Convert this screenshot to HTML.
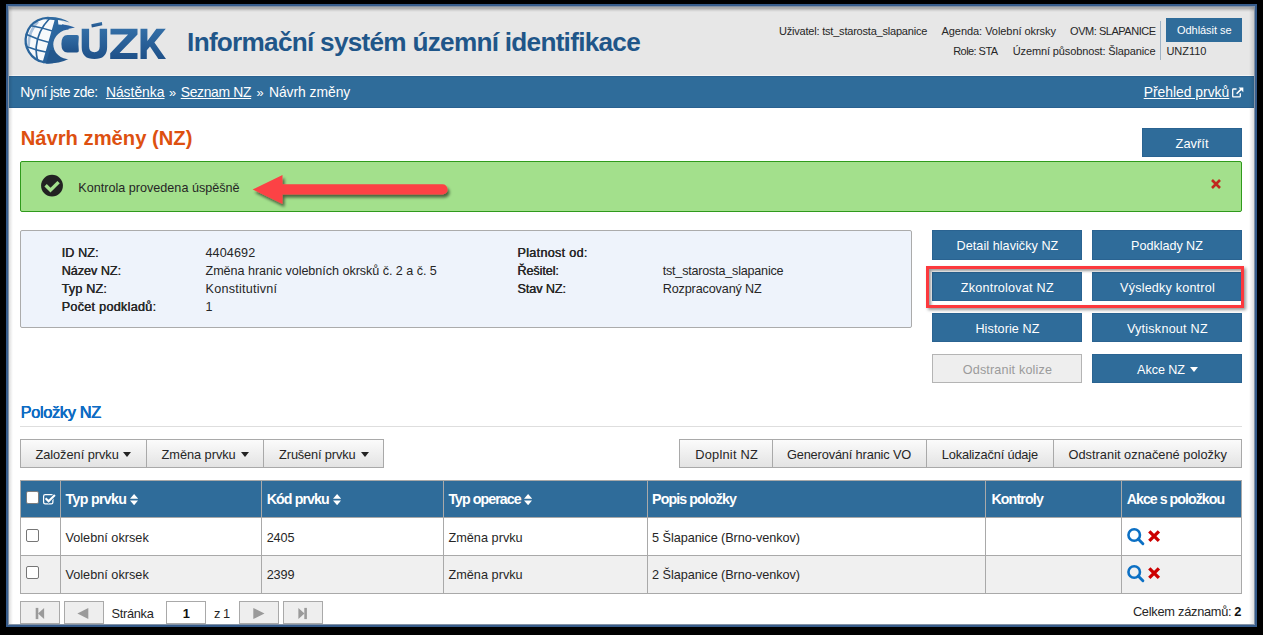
<!DOCTYPE html>
<html><head><meta charset="utf-8"><style>
html,body{margin:0;padding:0;}
body{width:1263px;height:635px;background:#000;position:relative;overflow:hidden;font-family:"Liberation Sans",sans-serif;}
.a{position:absolute;}
.t{position:absolute;white-space:pre;line-height:1;}
.caret{position:absolute;width:0;height:0;border-left:4px solid transparent;border-right:4px solid transparent;border-top:4px solid #222;}
</style></head><body>
<div class="a" style="left:6px;top:4px;width:1251px;height:623px;background:#375c8b;"></div>
<div class="a" style="left:8px;top:6px;width:1247px;height:619px;background:#8493a6;"></div>
<div class="a" style="left:9px;top:7px;width:1245px;height:617px;background:#fff;"></div>
<!-- header -->
<div class="a" style="left:9px;top:7px;width:1245px;height:68px;background:#e7e7e7;"></div>
<div class="a" style="left:9px;top:7px;width:1245px;height:5px;background:linear-gradient(#a8a8a8 0%,#b0b0b0 30%,#d2d2d2 65%,#e7e7e7 100%);"></div>
<div class="a" style="left:9px;top:75px;width:1245px;height:1px;background:#f4f4f4;"></div>
<div class="a" style="left:9px;top:76px;width:1245px;height:32px;background:#2f6c9a;box-shadow:inset 0 1px 0 #2a6190, inset 0 -1px 0 #2a6190;"></div>

<svg class="a" style="left:20px;top:12px" width="150" height="56" viewBox="20 12 150 56">
 <defs>
  <clipPath id="gc"><circle cx="48" cy="40.3" r="23.4"/></clipPath>
  <linearGradient id="lg" x1="0" y1="0" x2="0" y2="1"><stop offset="0" stop-color="#336ea6"/><stop offset="1" stop-color="#1f5189"/></linearGradient>
  <linearGradient id="gg" x1="0" y1="0" x2="1" y2="1"><stop offset="0" stop-color="#3473ac"/><stop offset="1" stop-color="#1d4f86"/></linearGradient>
 </defs>
 <circle cx="48" cy="40.3" r="23.4" fill="#f7f9fb"/>
 <g clip-path="url(#gc)">
  <g fill="none">
   <path d="M38 21.5 Q28.5 31 28.6 46" stroke="#a9c1dc" stroke-width="2.6"/>
   <path d="M49.5 18.5 Q37.5 31 36.2 47 Q35.8 56 38.6 63" stroke="#2b659c" stroke-width="1.7"/>
   <path d="M30 25.5 Q42 27.5 55 31.8" stroke="#2b659c" stroke-width="1.6"/>
   <path d="M25.5 34 Q38 40 52 43.2" stroke="#2b659c" stroke-width="1.6"/>
   <path d="M26.5 46.5 Q37 50.8 47 52.2" stroke="#2b659c" stroke-width="1.6"/>
  </g>
  <path d="M56.4 14 L41.5 66 L80 66 L80 28 Q68 24.6 58.4 24.4 Q57.6 20 58 14 Z" fill="url(#gg)"/>
 </g>
 <path d="M56 19.5 A22.3 22.3 0 1 0 44 62.24" fill="none" stroke="#2b659c" stroke-width="2.3"/>
 <path d="M46 63.6 Q60 63.5 68.5 59 L62 50 L50 50 Z" fill="#23578d"/>
 <path d="M62 24.2 Q69 25 75 27.6 Q69 28.8 63 30.5 Z" fill="#2a62a0"/>
 <path d="M46 16.95 Q62 16.3 69.7 22.6 Q62 19.6 56.5 20 L46 19.2 Z" fill="#2f6aa1"/>
 <ellipse cx="70" cy="44.5" rx="16.7" ry="15" fill="#e7e7e7"/>
 <path d="M67.5 35 H77 Q79 35 78.8 37 Q78 44 78.8 50.5 Q79 52.6 77 52.6 H67.5 Q61.4 52.6 61.4 44 Q61.4 35 67.5 35 Z" fill="url(#lg)"/>
 <g fill="url(#lg)">
  <path d="M81.7 28.8 h7.4 v17.8 q0 5.6 5.3 5.6 q5.3 0 5.3 -5.6 v-17.8 h7.4 v18.5 q0 11.8 -12.7 11.8 q-12.7 0 -12.7 -11.8 z"/>
  <path d="M91.3 24.2 L101.9 22 L102.3 25.2 L91.8 27.4 Z"/>
  <path d="M110.5 28.8 h27 v5.6 l-18 18.7 h18 v5.8 h-27.3 v-5.6 l17.9 -18.7 h-17.6 z"/>
  <path d="M140.5 28.8 h6.9 v12.3 l9 -12.3 h9.4 l-11.4 13.7 l11.6 16.4 h-7.6 l-8.4 -12.3 l-3.2 3.6 v8.7 h-6.3 z"/>
 </g>
</svg>
<!-- header right -->
<div class="a" style="left:1160px;top:21px;width:1px;height:39px;background:#9fb3c6;"></div>
<div class="a" style="left:1166px;top:18px;width:76px;height:24px;background:#2f6c9a;"></div>
<!-- zavrit -->
<div class="a" style="left:1142px;top:128px;width:100px;height:29px;box-sizing:border-box;background:#2f6c9a;border:1px solid #2a6391;"></div>
<!-- alert -->
<div class="a" style="left:20px;top:161px;width:1222px;height:51px;box-sizing:border-box;background:#a3e08c;border:1px solid #2f9a1c;border-radius:2px;"></div>
<svg class="a" style="left:40px;top:174px" width="24" height="24" viewBox="0 0 24 24">
 <circle cx="12" cy="11.65" r="10.9" fill="#222222"/>
 <path d="M5.6 11.3 L10.5 16.2 L18.6 8.1" stroke="#a3e08c" stroke-width="3.4" fill="none" stroke-linecap="butt"/>
</svg>
<svg class="a" style="left:1210px;top:178px" width="12" height="12" viewBox="0 0 12 12">
 <path d="M2 2 L10 10 M10 2 L2 10" stroke="#c0281e" stroke-width="2.6"/>
</svg>
<!-- arrow -->
<svg class="a" style="left:240px;top:165px" width="220" height="50" viewBox="240 165 220 50">
 <defs><filter id="sh" x="-20%" y="-50%" width="140%" height="200%"><feGaussianBlur in="SourceAlpha" stdDeviation="1.8"/><feOffset dx="1.5" dy="2.5"/><feComponentTransfer><feFuncA type="linear" slope="0.55"/></feComponentTransfer><feMerge><feMergeNode/><feMergeNode in="SourceGraphic"/></feMerge></filter></defs>
 <g filter="url(#sh)">
  <path d="M252.7 189.4 L282.5 174.9 L282.5 184.3 L442.5 184.3 A5.1 5.1 0 0 1 442.5 194.5 L282.5 194.5 L282.5 204 Z" fill="#fc4245"/>
 </g>
</svg>
<!-- info panel -->
<div class="a" style="left:20px;top:230px;width:892px;height:98px;box-sizing:border-box;background:#eef3fb;border:1px solid #ababab;border-radius:2px;"></div>
<div class="a" style="left:932px;top:230px;width:150px;height:30px;box-sizing:border-box;background:#2f6c9a;border:1px solid #2a6391;"></div><div class="a" style="left:1092px;top:230px;width:150px;height:30px;box-sizing:border-box;background:#2f6c9a;border:1px solid #2a6391;"></div><div class="a" style="left:932px;top:272px;width:150px;height:29px;box-sizing:border-box;background:#2f6c9a;border:1px solid #2a6391;"></div><div class="a" style="left:1092px;top:272px;width:150px;height:29px;box-sizing:border-box;background:#2f6c9a;border:1px solid #2a6391;"></div><div class="a" style="left:932px;top:313px;width:150px;height:29px;box-sizing:border-box;background:#2f6c9a;border:1px solid #2a6391;"></div><div class="a" style="left:1092px;top:313px;width:150px;height:29px;box-sizing:border-box;background:#2f6c9a;border:1px solid #2a6391;"></div><div class="a" style="left:932px;top:354px;width:150px;height:29px;box-sizing:border-box;background:#eeeeee;border:1px solid #b4b4b4;"></div><div class="a" style="left:1092px;top:354px;width:150px;height:29px;box-sizing:border-box;background:#2f6c9a;border:1px solid #2a6391;"></div>
<!-- red highlight -->
<div class="a" style="left:926px;top:266px;width:318px;height:42px;box-sizing:border-box;border:3px solid #fc393d;box-shadow:2px 2px 3px rgba(0,0,0,0.4), inset 2px 2px 3px rgba(0,0,0,0.4);"></div>
<div class="caret" style="left:1189.5px;top:367px;border-left-width:4.5px;border-right-width:4.5px;border-top:5px solid #fff;"></div>
<!-- polozky line -->
<div class="a" style="left:20px;top:426px;width:1222px;height:1px;background:#dedede;"></div>
<!-- toolbar left -->
<div class="a" style="left:20px;top:439px;width:364px;height:29px;box-sizing:border-box;border:1px solid #a9a9a9;background:linear-gradient(#fbfbfb,#e3e3e3);"></div>
<div class="a" style="left:146px;top:439px;width:1px;height:29px;background:#a9a9a9;"></div>
<div class="a" style="left:263px;top:439px;width:1px;height:29px;background:#a9a9a9;"></div>
<div class="caret" style="left:123px;top:452px;border-top-width:5px"></div>
<div class="caret" style="left:241px;top:452px;border-top-width:5px"></div>
<div class="caret" style="left:360.5px;top:452px;border-top-width:5px"></div>
<!-- toolbar right -->
<div class="a" style="left:679px;top:439px;width:563px;height:29px;box-sizing:border-box;border:1px solid #a9a9a9;background:linear-gradient(#fbfbfb,#e3e3e3);"></div>
<div class="a" style="left:772px;top:439px;width:1px;height:29px;background:#a9a9a9;"></div>
<div class="a" style="left:926px;top:439px;width:1px;height:29px;background:#a9a9a9;"></div>
<div class="a" style="left:1053px;top:439px;width:1px;height:29px;background:#a9a9a9;"></div>
<!-- table -->
<div class="a" style="left:20px;top:480px;width:1222px;height:114px;box-sizing:border-box;border:1px solid #a9a9a9;background:#fff;"></div>
<div class="a" style="left:21px;top:481px;width:1220px;height:36px;background:#2f6c9a;"></div>
<div class="a" style="left:21px;top:518px;width:1220px;height:37px;background:#fff;"></div>
<div class="a" style="left:21px;top:555px;width:1220px;height:1px;background:#a9a9a9;"></div>
<div class="a" style="left:21px;top:556px;width:1220px;height:37px;background:#f0f0f0;"></div>
<div class="a" style="left:21px;top:517px;width:1220px;height:1px;background:#a9a9a9;"></div>
<div class="a" style="left:60px;top:481px;width:1px;height:112px;background:#a9a9a9;"></div><div class="a" style="left:261px;top:481px;width:1px;height:112px;background:#a9a9a9;"></div><div class="a" style="left:443px;top:481px;width:1px;height:112px;background:#a9a9a9;"></div><div class="a" style="left:647px;top:481px;width:1px;height:112px;background:#a9a9a9;"></div><div class="a" style="left:985px;top:481px;width:1px;height:112px;background:#a9a9a9;"></div><div class="a" style="left:1121px;top:481px;width:1px;height:112px;background:#a9a9a9;"></div>
<!-- header checkbox icons -->
<div class="a" style="left:26px;top:491px;width:13px;height:13px;box-sizing:border-box;background:#fff;border:1px solid #7d7d7d;border-radius:2px;"></div>
<svg class="a" style="left:42px;top:492px" width="15" height="13" viewBox="0 0 15 13">
 <rect x="1.6" y="2.6" width="9.3" height="9.3" rx="1.6" stroke="#fff" stroke-width="1.25" fill="none"/>
 <path d="M3.6 6.2 L6.6 9.2 L12.9 2.9" stroke="#2f6c9a" stroke-width="3.6" fill="none"/>
 <path d="M3.6 6.2 L6.6 9.2 L12.9 2.9" stroke="#fff" stroke-width="2.1" fill="none"/>
</svg>
<!-- row checkboxes -->
<div class="a" style="left:26px;top:529px;width:13px;height:13px;box-sizing:border-box;border:1px solid #767676;border-radius:2px;background:#fff;"></div>
<div class="a" style="left:26px;top:566px;width:13px;height:13px;box-sizing:border-box;border:1px solid #767676;border-radius:2px;background:#fff;"></div>
<svg class="a" style="left:129.7px;top:493.9px" width="8.2" height="11.2" viewBox="0 0 8.2 11.2"><path d="M4.1 0 L8.2 4.8 H0 Z M4.1 11.2 L8.2 6.4 H0 Z" fill="#fff"/></svg><svg class="a" style="left:333.2px;top:493.9px" width="8.2" height="11.2" viewBox="0 0 8.2 11.2"><path d="M4.1 0 L8.2 4.8 H0 Z M4.1 11.2 L8.2 6.4 H0 Z" fill="#fff"/></svg><svg class="a" style="left:523.7px;top:493.9px" width="8.2" height="11.2" viewBox="0 0 8.2 11.2"><path d="M4.1 0 L8.2 4.8 H0 Z M4.1 11.2 L8.2 6.4 H0 Z" fill="#fff"/></svg>
<svg class="a" style="left:1126px;top:527px" width="19" height="19" viewBox="0 0 19 19"><circle cx="8.2" cy="8" r="5.75" stroke="#0c70c4" stroke-width="2.6" fill="none"/><path d="M12.2 12 L16.9 16.7" stroke="#0c70c4" stroke-width="2.9" stroke-linecap="round"/></svg><svg class="a" style="left:1147px;top:529px" width="14" height="14" viewBox="0 0 14 14"><path d="M2.3 2.3 L11.9 11.9 M11.9 2.3 L2.3 11.9" stroke="#cc0000" stroke-width="3.3" stroke-linecap="butt"/></svg><svg class="a" style="left:1126px;top:564px" width="19" height="19" viewBox="0 0 19 19"><circle cx="8.2" cy="8" r="5.75" stroke="#0c70c4" stroke-width="2.6" fill="none"/><path d="M12.2 12 L16.9 16.7" stroke="#0c70c4" stroke-width="2.9" stroke-linecap="round"/></svg><svg class="a" style="left:1147px;top:566px" width="14" height="14" viewBox="0 0 14 14"><path d="M2.3 2.3 L11.9 11.9 M11.9 2.3 L2.3 11.9" stroke="#cc0000" stroke-width="3.3" stroke-linecap="butt"/></svg>
<!-- pager -->
<div class="a" style="left:20px;top:601px;width:40px;height:23px;box-sizing:border-box;border:1px solid #a9a9a9;background:#eee;"></div>
<div class="a" style="left:64px;top:601px;width:40px;height:23px;box-sizing:border-box;border:1px solid #a9a9a9;background:#eee;"></div>
<div class="a" style="left:166px;top:601px;width:40px;height:23px;box-sizing:border-box;border:1px solid #a9a9a9;background:#fff;"></div>
<div class="a" style="left:239px;top:601px;width:40px;height:23px;box-sizing:border-box;border:1px solid #a9a9a9;background:#eee;"></div>
<div class="a" style="left:283px;top:601px;width:40px;height:23px;box-sizing:border-box;border:1px solid #a9a9a9;background:#eee;"></div>
<svg class="a" style="left:20px;top:601px" width="310" height="23" viewBox="20 601 310 23">
 <g fill="#9a9a9a">
  <rect x="35.7" y="607.9" width="2.6" height="11.2"/><path d="M38 613.5 L44.1 607.9 V619.1 Z"/>
  <path d="M77.4 613.5 L88.3 607.9 V619.1 Z"/>
  <path d="M264.5 613.5 L253.3 607.9 V619.1 Z"/>
  <rect x="304.3" y="607.9" width="2.6" height="11.2"/><path d="M304.5 613.5 L298.4 607.9 V619.1 Z"/>
 </g>
</svg>
<!-- texts -->
<span class="t" id="t0" style="left:187.10px;top:28.72px;font-size:26.2px;font-weight:700;color:#1f5689;letter-spacing:-0.740px;">Informační systém územní identifikace</span><span class="t" id="t1" style="left:779.00px;top:25.59px;font-size:11px;font-weight:400;color:#262626;letter-spacing:-0.206px;">Uživatel: tst_starosta_slapanice</span><span class="t" id="t2" style="left:941.50px;top:25.59px;font-size:11px;font-weight:400;color:#262626;letter-spacing:-0.051px;">Agenda: Volební okrsky</span><span class="t" id="t3" style="left:1070.10px;top:25.59px;font-size:11px;font-weight:400;color:#262626;letter-spacing:-0.470px;">OVM: SLAPANICE</span><span class="t" id="t4" style="left:953.20px;top:46.09px;font-size:11px;font-weight:400;color:#262626;letter-spacing:-0.552px;">Role: STA</span><span class="t" id="t5" style="left:1012.80px;top:46.09px;font-size:11px;font-weight:400;color:#262626;letter-spacing:-0.129px;">Územní působnost: Šlapanice</span><span class="t" id="t6" style="left:1166.40px;top:46.09px;font-size:11px;font-weight:400;color:#262626;letter-spacing:-0.011px;">UNZ110</span><span class="t" id="t7" style="left:1177.00px;top:24.89px;font-size:11px;font-weight:400;color:#fff;letter-spacing:-0.053px;">Odhlásit se</span><span class="t" id="t8" style="left:20.20px;top:86.43px;font-size:13.9px;font-weight:400;color:#fff;letter-spacing:-0.481px;">Nyní jste zde:</span><span class="t" id="t9" style="left:105.90px;top:86.43px;font-size:13.9px;font-weight:400;color:#fff;letter-spacing:-0.012px;text-decoration:underline;">Nástěnka</span><span class="t" id="t10" style="left:168.90px;top:87.36px;font-size:12.8px;font-weight:400;color:#fff;letter-spacing:0.000px;">»</span><span class="t" id="t11" style="left:180.70px;top:86.43px;font-size:13.9px;font-weight:400;color:#fff;letter-spacing:-0.318px;text-decoration:underline;">Seznam NZ</span><span class="t" id="t12" style="left:256.60px;top:87.36px;font-size:12.8px;font-weight:400;color:#fff;letter-spacing:0.000px;">»</span><span class="t" id="t13" style="left:268.90px;top:86.43px;font-size:13.9px;font-weight:400;color:#fff;letter-spacing:-0.043px;">Návrh změny</span><span class="t" id="t14" style="left:1143.70px;top:86.43px;font-size:13.9px;font-weight:400;color:#fff;letter-spacing:-0.010px;text-decoration:underline;">Přehled prvků</span><span class="t" id="t15" style="left:20.70px;top:128.10px;font-size:20.2px;font-weight:700;color:#dd5010;letter-spacing:0.005px;">Návrh změny (NZ)</span><span class="t" id="t16" style="left:1175.60px;top:138.36px;font-size:12.8px;font-weight:400;color:#fff;letter-spacing:0.036px;">Zavřít</span><span class="t" id="t17" style="left:78.30px;top:181.53px;font-size:12.6px;font-weight:400;color:#262626;letter-spacing:0.010px;">Kontrola provedena úspěšně</span><span class="t" id="t18" style="left:61.50px;top:246.53px;font-size:12.6px;font-weight:400;text-shadow:0.4px 0 0 #262626;color:#262626;letter-spacing:0.102px;">ID NZ:</span><span class="t" id="t19" style="left:205.50px;top:246.53px;font-size:12.6px;font-weight:400;color:#262626;letter-spacing:0.111px;">4404692</span><span class="t" id="t20" style="left:61.50px;top:264.53px;font-size:12.6px;font-weight:400;text-shadow:0.4px 0 0 #262626;color:#262626;letter-spacing:-0.011px;">Název NZ:</span><span class="t" id="t21" style="left:205.50px;top:264.53px;font-size:12.6px;font-weight:400;color:#262626;letter-spacing:-0.043px;">Změna hranic volebních okrsků č. 2 a č. 5</span><span class="t" id="t22" style="left:61.50px;top:282.53px;font-size:12.6px;font-weight:400;text-shadow:0.4px 0 0 #262626;color:#262626;letter-spacing:0.184px;">Typ NZ:</span><span class="t" id="t23" style="left:205.50px;top:282.53px;font-size:12.6px;font-weight:400;color:#262626;letter-spacing:0.241px;">Konstitutivní</span><span class="t" id="t24" style="left:61.50px;top:301.43px;font-size:12.6px;font-weight:400;text-shadow:0.4px 0 0 #262626;color:#262626;letter-spacing:0.291px;">Počet podkladů:</span><span class="t" id="t25" style="left:205.50px;top:301.43px;font-size:12.6px;font-weight:400;color:#262626;letter-spacing:0.000px;">1</span><span class="t" id="t26" style="left:517.30px;top:246.53px;font-size:12.6px;font-weight:400;text-shadow:0.4px 0 0 #262626;color:#262626;letter-spacing:0.308px;">Platnost od:</span><span class="t" id="t27" style="left:517.30px;top:264.53px;font-size:12.6px;font-weight:400;text-shadow:0.4px 0 0 #262626;color:#262626;letter-spacing:-0.086px;">Řešitel:</span><span class="t" id="t28" style="left:662.70px;top:264.53px;font-size:12.6px;font-weight:400;color:#262626;letter-spacing:-0.210px;">tst_starosta_slapanice</span><span class="t" id="t29" style="left:517.30px;top:282.53px;font-size:12.6px;font-weight:400;text-shadow:0.4px 0 0 #262626;color:#262626;letter-spacing:-0.071px;">Stav NZ:</span><span class="t" id="t30" style="left:662.70px;top:282.53px;font-size:12.6px;font-weight:400;color:#262626;letter-spacing:-0.121px;">Rozpracovaný NZ</span><span class="t" id="t31" style="left:956.60px;top:239.53px;font-size:12.6px;font-weight:400;color:#fff;letter-spacing:0.054px;">Detail hlavičky NZ</span><span class="t" id="t32" style="left:1131.10px;top:239.53px;font-size:12.6px;font-weight:400;color:#fff;letter-spacing:-0.031px;">Podklady NZ</span><span class="t" id="t33" style="left:960.80px;top:282.23px;font-size:12.6px;font-weight:400;color:#fff;letter-spacing:0.229px;">Zkontrolovat NZ</span><span class="t" id="t34" style="left:1120.10px;top:282.23px;font-size:12.6px;font-weight:400;color:#fff;letter-spacing:0.193px;">Výsledky kontrol</span><span class="t" id="t35" style="left:975.40px;top:323.23px;font-size:12.6px;font-weight:400;color:#fff;letter-spacing:0.112px;">Historie NZ</span><span class="t" id="t36" style="left:1126.90px;top:323.23px;font-size:12.6px;font-weight:400;color:#fff;letter-spacing:0.232px;">Vytisknout NZ</span><span class="t" id="t37" style="left:962.80px;top:364.33px;font-size:12.6px;font-weight:400;color:#9b9b9b;letter-spacing:0.154px;">Odstranit kolize</span><span class="t" id="t38" style="left:1137.10px;top:364.33px;font-size:12.6px;font-weight:400;color:#fff;letter-spacing:-0.066px;">Akce NZ</span><span class="t" id="t39" style="left:20.40px;top:403.57px;font-size:16.1px;font-weight:400;text-shadow:0.35px 0 0 #0d6cc4,0.7px 0 0 #0d6cc4;color:#0d6cc4;letter-spacing:-0.209px;">Položky NZ</span><span class="t" id="t40" style="left:35.40px;top:449.36px;font-size:12.8px;font-weight:400;color:#262626;letter-spacing:-0.041px;">Založení prvku</span><span class="t" id="t41" style="left:161.60px;top:449.36px;font-size:12.8px;font-weight:400;color:#262626;letter-spacing:-0.059px;">Změna prvku</span><span class="t" id="t42" style="left:279.10px;top:449.36px;font-size:12.8px;font-weight:400;color:#262626;letter-spacing:-0.145px;">Zrušení prvku</span><span class="t" id="t43" style="left:695.30px;top:449.36px;font-size:12.8px;font-weight:400;color:#262626;letter-spacing:0.227px;">Doplnit NZ</span><span class="t" id="t44" style="left:786.90px;top:449.36px;font-size:12.8px;font-weight:400;color:#262626;letter-spacing:-0.154px;">Generování hranic VO</span><span class="t" id="t45" style="left:941.80px;top:449.36px;font-size:12.8px;font-weight:400;color:#262626;letter-spacing:-0.162px;">Lokalizační údaje</span><span class="t" id="t46" style="left:1068.50px;top:449.36px;font-size:12.8px;font-weight:400;color:#262626;letter-spacing:0.015px;">Odstranit označené položky</span><span class="t" id="t47" style="left:65.50px;top:492.08px;font-size:14.2px;font-weight:700;color:#fff;letter-spacing:-0.656px;">Typ prvku</span><span class="t" id="t48" style="left:266.70px;top:492.08px;font-size:14.2px;font-weight:700;color:#fff;letter-spacing:-0.895px;">Kód prvku</span><span class="t" id="t49" style="left:448.40px;top:492.08px;font-size:14.2px;font-weight:700;color:#fff;letter-spacing:-0.923px;">Typ operace</span><span class="t" id="t50" style="left:652.10px;top:492.08px;font-size:14.2px;font-weight:700;color:#fff;letter-spacing:-0.891px;">Popis položky</span><span class="t" id="t51" style="left:991.40px;top:492.08px;font-size:14.2px;font-weight:700;color:#fff;letter-spacing:-0.847px;">Kontroly</span><span class="t" id="t52" style="left:1126.70px;top:492.08px;font-size:14.2px;font-weight:700;color:#fff;letter-spacing:-0.968px;">Akce s položkou</span><span class="t" id="t53" style="left:65.40px;top:532.45px;font-size:12.7px;font-weight:400;color:#262626;letter-spacing:0.013px;">Volební okrsek</span><span class="t" id="t54" style="left:266.70px;top:532.45px;font-size:12.7px;font-weight:400;color:#262626;letter-spacing:-0.145px;">2405</span><span class="t" id="t55" style="left:448.40px;top:532.45px;font-size:12.7px;font-weight:400;color:#262626;letter-spacing:0.025px;">Změna prvku</span><span class="t" id="t56" style="left:652.10px;top:532.45px;font-size:12.7px;font-weight:400;color:#262626;letter-spacing:-0.071px;">5 Šlapanice (Brno-venkov)</span><span class="t" id="t57" style="left:65.40px;top:569.45px;font-size:12.7px;font-weight:400;color:#262626;letter-spacing:0.013px;">Volební okrsek</span><span class="t" id="t58" style="left:266.70px;top:569.45px;font-size:12.7px;font-weight:400;color:#262626;letter-spacing:-0.145px;">2399</span><span class="t" id="t59" style="left:448.40px;top:569.45px;font-size:12.7px;font-weight:400;color:#262626;letter-spacing:0.025px;">Změna prvku</span><span class="t" id="t60" style="left:652.10px;top:569.45px;font-size:12.7px;font-weight:400;color:#262626;letter-spacing:-0.071px;">2 Šlapanice (Brno-venkov)</span><span class="t" id="t61" style="left:111.60px;top:608.36px;font-size:12.8px;font-weight:400;color:#262626;letter-spacing:-0.318px;">Stránka</span><span class="t" id="t62" style="left:182.70px;top:608.36px;font-size:12.8px;font-weight:700;color:#111;letter-spacing:0.000px;">1</span><span class="t" id="t63" style="left:214.00px;top:608.36px;font-size:12.8px;font-weight:400;color:#262626;letter-spacing:-0.539px;">z 1</span><span class="t" id="t64" style="left:1132.90px;top:606.36px;font-size:12.8px;font-weight:400;color:#262626;letter-spacing:-0.259px;">Celkem záznamů:</span><span class="t" id="t65" style="left:1234.30px;top:606.36px;font-size:12.8px;font-weight:700;color:#111;letter-spacing:0.000px;">2</span>
<!-- ext link icon -->
<svg class="a" style="left:1231px;top:86px" width="14" height="14" viewBox="0 0 14 14">
 <path d="M9.3 7.3 V10.2 Q9.3 10.9 8.6 10.9 H2.4 Q1.7 10.9 1.7 10.2 V3.7 Q1.7 3 2.4 3 H5.5" stroke="#fff" stroke-width="1.3" fill="none"/>
 <path d="M5.6 7.8 L10.8 2.6" stroke="#fff" stroke-width="1.6" fill="none"/>
 <path d="M7.6 1.6 L12.3 1.6 L12.3 6.3 Z" fill="#fff"/>
</svg>
<!-- window shading -->
<div class="a" style="left:9px;top:7px;width:4px;height:617px;background:linear-gradient(90deg,rgba(0,0,0,0.13),rgba(0,0,0,0));"></div>
<div class="a" style="left:1249px;top:7px;width:5px;height:617px;background:linear-gradient(90deg,rgba(0,0,0,0),rgba(0,0,0,0.13));"></div>
</body></html>
